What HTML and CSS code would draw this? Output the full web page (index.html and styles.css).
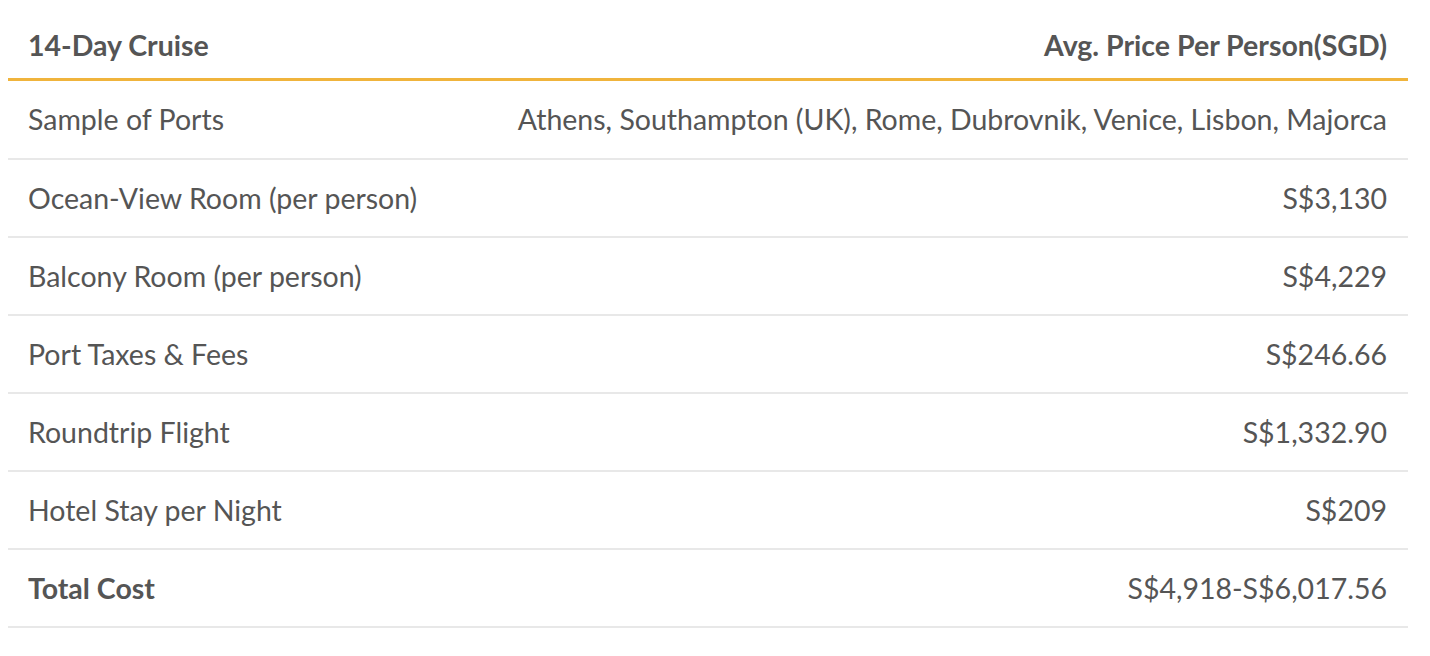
FILE: index.html
```html
<!DOCTYPE html>
<html>
<head>
<meta charset="utf-8">
<link rel="stylesheet" href="styles.css">
</head>
<body>
<table class="cost-table">
  <thead>
    <tr><th class="label">14-Day Cruise</th><th class="value">Avg. Price Per Person(SGD)</th></tr>
  </thead>
  <tbody>
    <tr class="first"><td class="label">Sample of Ports</td><td class="value">Athens, Southampton (UK), Rome, Dubrovnik, Venice, Lisbon, Majorca</td></tr>
    <tr><td class="label">Ocean-View Room (per person)</td><td class="value">S$3,130</td></tr>
    <tr><td class="label">Balcony Room (per person)</td><td class="value">S$4,229</td></tr>
    <tr><td class="label">Port Taxes &amp; Fees</td><td class="value">S$246.66</td></tr>
    <tr><td class="label">Roundtrip Flight</td><td class="value">S$1,332.90</td></tr>
    <tr><td class="label">Hotel Stay per Night</td><td class="value">S$209</td></tr>
    <tr class="total"><td class="label">Total Cost</td><td class="value">S$4,918-S$6,017.56</td></tr>
  </tbody>
</table>
</body>
</html>
```
FILE: styles.css
```css
body {
  margin: 8px;
  background: #fff;
  font-family: Lato, "Open Sans", sans-serif;
  color: #555;
}
.cost-table {
  width: 1400px;
  border-collapse: collapse;
  font-size: 28.5px;
  line-height: 1.2;
}
.cost-table th, .cost-table td {
  padding: 0 21px 0 20px;
  text-align: left;
  white-space: nowrap;
}
.cost-table th {
  height: 66px;
  padding-top: 4px;
  font-weight: 700;
  border-bottom: 3px solid #f0b43c;
}
.cost-table td {
  height: 76px;
  font-weight: 400;
  border-bottom: 2px solid #e8e8e8;
}
.cost-table .first td { height: 77px; }
.cost-table .value { text-align: right; }
.cost-table .total .label { font-weight: 700; }
```
